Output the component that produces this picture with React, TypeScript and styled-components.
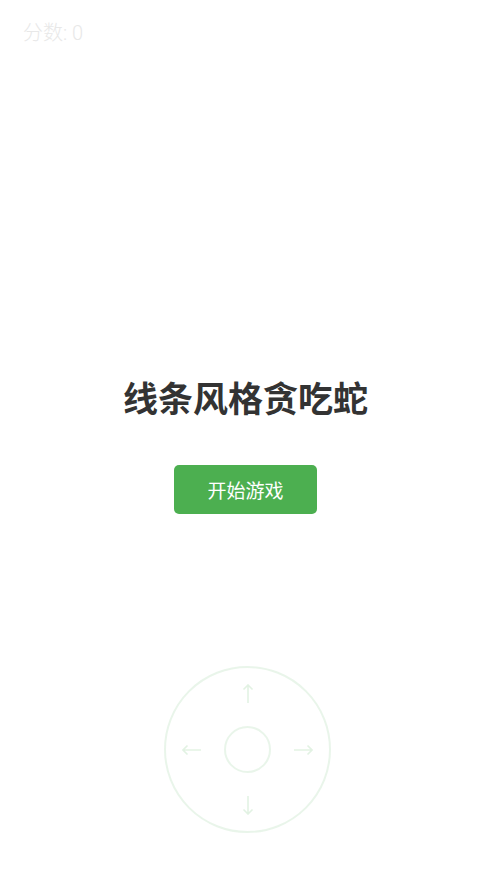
import React from "react";
import styled, { createGlobalStyle } from "styled-components";

const GlobalStyle = createGlobalStyle`
  html, body {
    margin: 0;
    padding: 0;
    background: #ffffff;
  }
  body {
    font-family: Roboto, "Noto Sans CJK SC", sans-serif;
  }
`;

const Page = styled.div`
  min-height: 100vh;
  display: flex;
  flex-direction: column;
  align-items: center;
  box-sizing: border-box;
`;

const ScoreBar = styled.div`
  align-self: stretch;
  padding: 20px 23px 0;
  font-family: Roboto, "Noto Sans CJK SC", sans-serif;
  font-size: 20px;
  font-weight: 300;
  line-height: 26px;
  color: #e8e8e8;
`;

const Menu = styled.div`
  margin-top: 327px;
  display: flex;
  flex-direction: column;
  align-items: center;
`;

const Title = styled.h1`
  margin: 0;
  font-family: "Noto Sans CJK SC", sans-serif;
  font-size: 35px;
  line-height: 48px;
  font-weight: 700;
  color: #333333;
`;

const StartButton = styled.button`
  margin-top: 44px;
  width: 143px;
  height: 49px;
  border: none;
  border-radius: 5px;
  background: #4caf50;
  color: #ffffff;
  font-family: "Noto Sans CJK SC", sans-serif;
  font-size: 19px;
  cursor: pointer;
`;

const Joystick = styled.div`
  margin-top: 152px;
  margin-left: 4px;
  width: 167px;
  height: 167px;
  box-sizing: border-box;
  border: 2px solid rgba(76, 175, 80, 0.12);
  border-radius: 50%;
  display: grid;
  grid-template-columns: 40px 47px 40px;
  grid-template-rows: 40px 47px 40px;
  gap: 12px;
  justify-content: center;
  align-content: center;
`;

const ArrowCell = styled.span<{ $area: string }>`
  grid-area: ${(p) => p.$area};
  display: flex;
  align-items: center;
  justify-content: center;
  color: rgba(76, 175, 80, 0.16);
`;

const Knob = styled.div`
  grid-area: 2 / 2;
  box-sizing: border-box;
  width: 47px;
  height: 47px;
  border: 2px solid rgba(76, 175, 80, 0.12);
  border-radius: 50%;
`;

const arrowPaths: Record<string, { w: number; h: number; d: string }> = {
  up: { w: 12, h: 20, d: "M6 19V1M1.5 5.5L6 1l4.5 4.5" },
  down: { w: 12, h: 20, d: "M6 1v18M1.5 14.5L6 19l4.5-4.5" },
  left: { w: 20, h: 12, d: "M19 6H1M5.5 1.5L1 6l4.5 4.5" },
  right: { w: 20, h: 12, d: "M1 6h18M14.5 1.5L19 6l-4.5 4.5" },
};

const Arrow = ({ dir, area }: { dir: string; area: string }) => {
  const a = arrowPaths[dir];
  return (
    <ArrowCell $area={area}>
      <svg width={a.w} height={a.h} viewBox={`0 0 ${a.w} ${a.h}`} fill="none">
        <path d={a.d} stroke="currentColor" strokeWidth="1.6" />
      </svg>
    </ArrowCell>
  );
};

const App = () => {
  return (
    <>
      <GlobalStyle />
      <Page>
        <ScoreBar>分数: 0</ScoreBar>
        <Menu>
          <Title>线条风格贪吃蛇</Title>
          <StartButton>开始游戏</StartButton>
        </Menu>
        <Joystick>
          <Arrow dir="up" area="1 / 2" />
          <Arrow dir="left" area="2 / 1" />
          <Knob />
          <Arrow dir="right" area="2 / 3" />
          <Arrow dir="down" area="3 / 2" />
        </Joystick>
      </Page>
    </>
  );
};

export default App;
